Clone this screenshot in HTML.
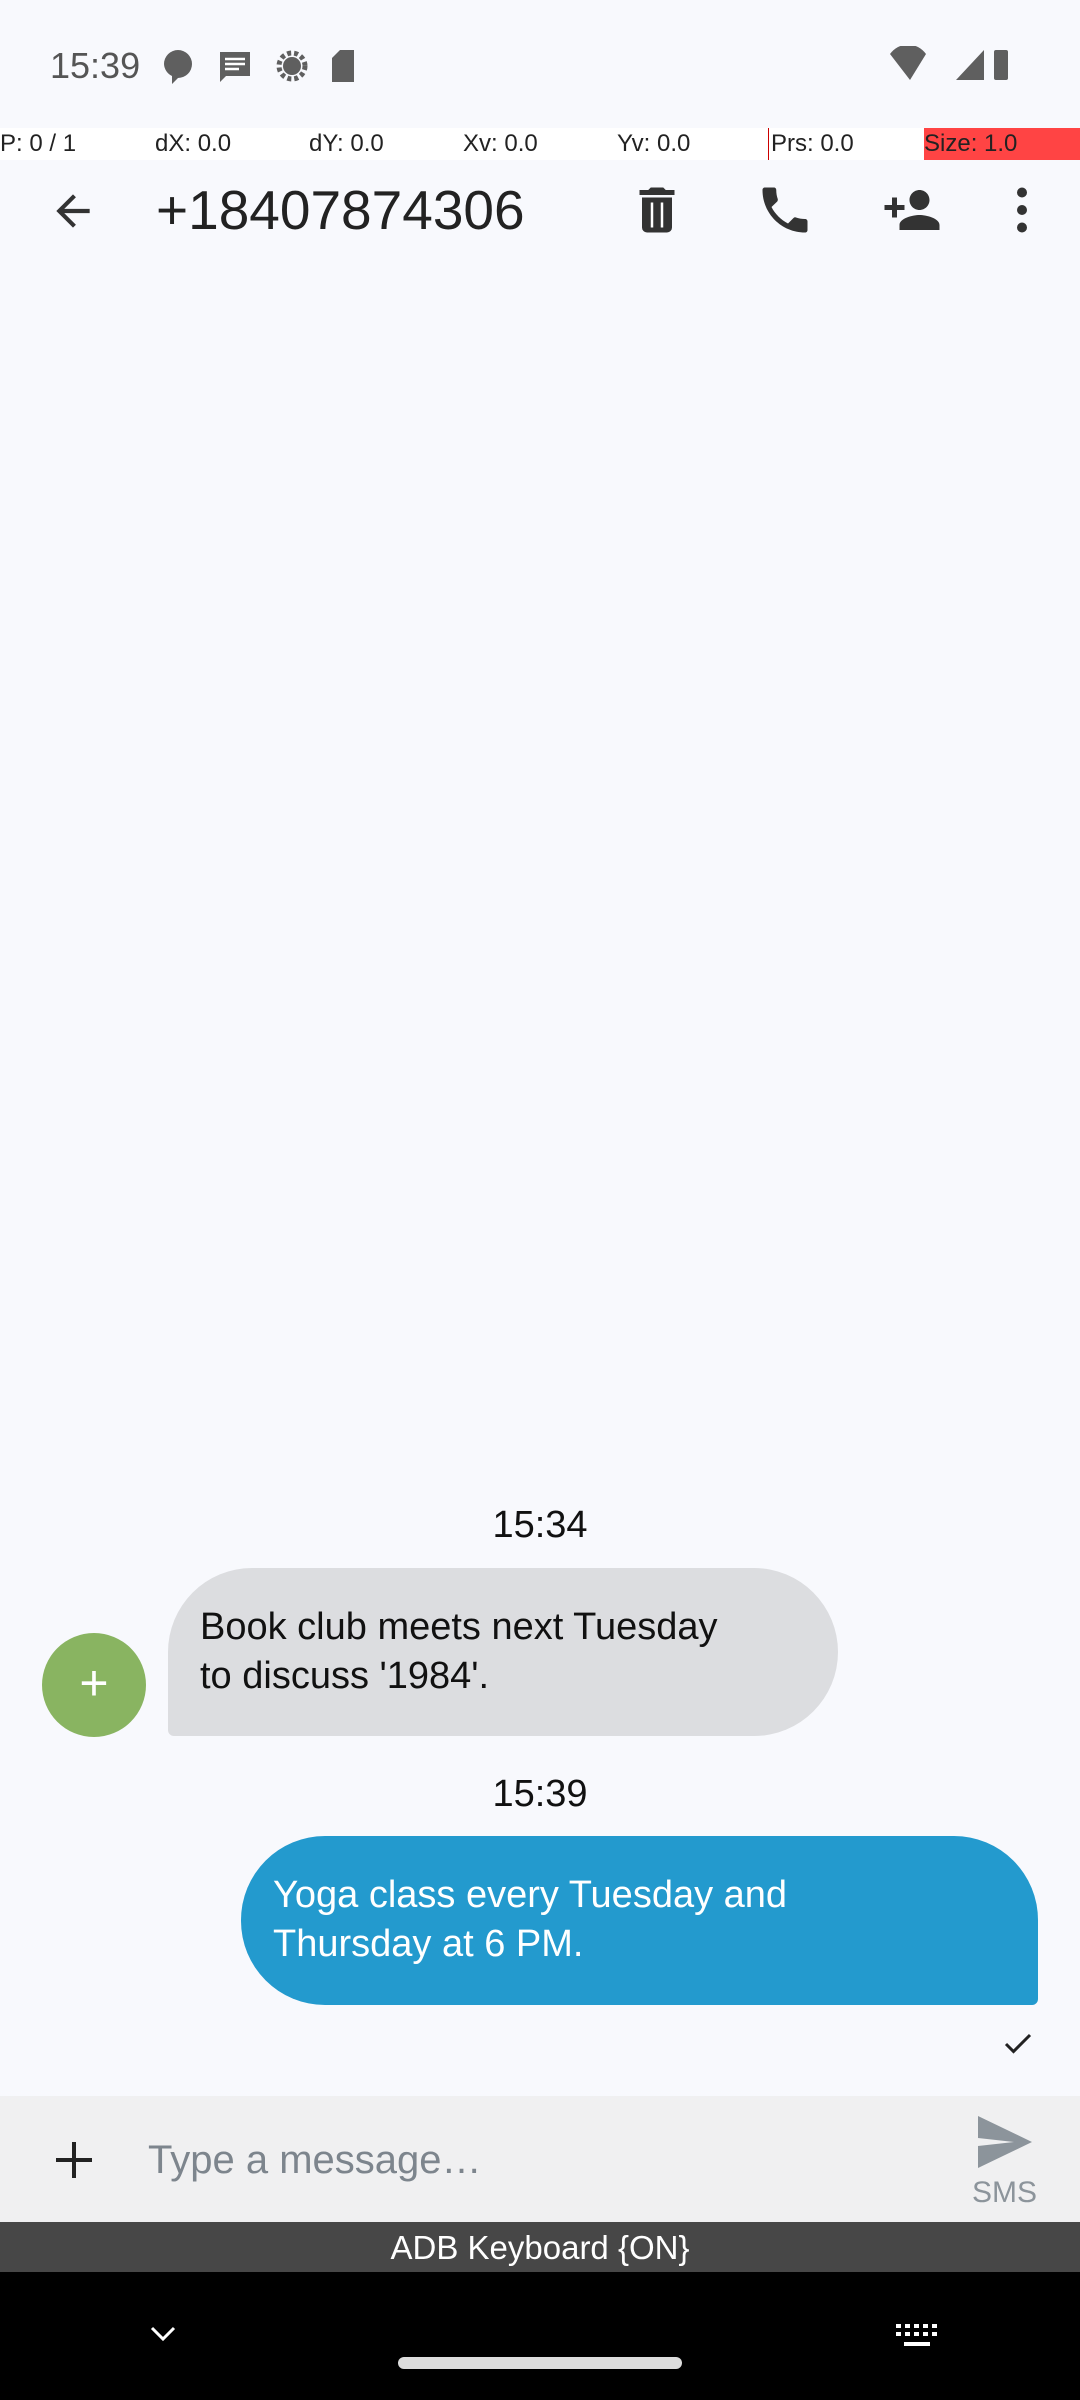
<!DOCTYPE html>
<html><head><meta charset="utf-8"><style>
*{margin:0;padding:0;box-sizing:border-box}
body{width:1080px;height:2400px;background:#f8f9fd;position:relative;overflow:hidden;font-family:"Liberation Sans",sans-serif}
.a{position:absolute}
</style></head><body>
<div class="a" style="left:50px;top:45px;font-size:36px;color:#555">15:39</div>
<svg class="a" style="left:160px;top:46px" width="220" height="40" viewBox="0 0 220 40">
<path d="M4 18a14 14 0 1 1 14 14l-6 6v-8a14 14 0 0 1-8-12z" fill="#5f5f5f"/>
<path d="M60 6h30v24H66l-6 6z" fill="#5f5f5f"/><path d="M65 13h20M65 18h20M65 23h14" stroke="#fff" stroke-width="2.5"/>
<circle cx="132" cy="20" r="13" fill="none" stroke="#5f5f5f" stroke-width="5" stroke-dasharray="4 3"/><circle cx="132" cy="20" r="9" fill="#5f5f5f"/>
<path d="M180 4h14v32h-22V12z" fill="#5f5f5f"/>
</svg>
<svg class="a" style="left:888px;top:46px" width="130" height="40" viewBox="0 0 130 40">
<path d="M2 8a22 22 0 0 1 36 0L22 34z" fill="#5f5f5f"/>
<path d="M68 34L96 4v30z" fill="#5f5f5f"/>
<rect x="106" y="4" width="14" height="30" rx="2" fill="#5f5f5f"/>
</svg>
<div class="a" style="left:0;top:128px;width:1080px;height:32px;background:#fff;font-size:24px;color:#222;line-height:32px">
<span class="a" style="left:0">P: 0 / 1</span><span class="a" style="left:155px">dX: 0.0</span><span class="a" style="left:309px">dY: 0.0</span><span class="a" style="left:463px">Xv: 0.0</span><span class="a" style="left:617px">Yv: 0.0</span><span class="a" style="left:768px;border-left:1px solid #c00;padding-left:2px">Prs: 0.0</span><span class="a" style="left:924px;width:156px;background:#f44;height:32px">Size: 1.0</span></div>
<svg class="a" style="left:48px;top:186px" width="50" height="50" viewBox="0 0 24 24"><path d="M20 11H7.8l5.6-5.6L12 4l-8 8 8 8 1.4-1.4L7.8 13H20z" fill="#333"/></svg>
<div class="a" style="left:156px;top:178px;font-size:55px;color:#222">+18407874306</div>
<svg class="a" style="left:627px;top:180px" width="60" height="60" viewBox="0 0 24 24"><path d="M6 19a2 2 0 0 0 2 2h8a2 2 0 0 0 2-2V7H6zM19 4h-3.5l-1-1h-5l-1 1H5v2h14z" fill="#333"/><path d="M10 9v10M14 9v10" stroke="#fff" stroke-width="1"/></svg>
<svg class="a" style="left:755px;top:180px" width="60" height="60" viewBox="0 0 24 24"><path d="M6.6 10.8c1.4 2.8 3.8 5.1 6.6 6.6l2.2-2.2c.3-.3.7-.4 1-.2 1.1.4 2.3.6 3.6.6.6 0 1 .4 1 1V20c0 .6-.4 1-1 1C10.6 21 3 13.4 3 4c0-.6.4-1 1-1h3.5c.6 0 1 .4 1 1 0 1.3.2 2.5.6 3.6.1.3 0 .7-.2 1z" fill="#333"/></svg>
<svg class="a" style="left:880px;top:180px" width="64" height="60" viewBox="0 0 24 24"><path d="M15 12c2.2 0 4-1.8 4-4s-1.8-4-4-4-4 1.8-4 4 1.8 4 4 4zm-9-2V7H4v3H1v2h3v3h2v-3h3v-2zm9 4c-2.7 0-8 1.3-8 4v2h16v-2c0-2.7-5.3-4-8-4z" fill="#333"/></svg>
<svg class="a" style="left:992px;top:180px" width="60" height="60" viewBox="0 0 24 24"><circle cx="12" cy="5" r="2" fill="#333"/><circle cx="12" cy="12" r="2" fill="#333"/><circle cx="12" cy="19" r="2" fill="#333"/></svg>
<div class="a" style="left:0;width:1080px;top:1504px;text-align:center;font-size:38px;color:#111">15:34</div>
<div class="a" style="left:42px;top:1633px;width:104px;height:104px;border-radius:50%;background:#89b461;color:#fff;font-size:50px;text-align:center;line-height:100px">+</div>
<div class="a" style="left:168px;top:1568px;width:670px;height:168px;background:#dcdde0;border-radius:84px 84px 84px 6px;padding:35px 32px;font-size:38px;line-height:49px;color:#111;white-space:nowrap">Book club meets next Tuesday<br>to discuss '1984'.</div>
<div class="a" style="left:0;width:1080px;top:1773px;text-align:center;font-size:38px;color:#111">15:39</div>
<div class="a" style="left:241px;top:1836px;width:797px;height:169px;background:#239ace;border-radius:84px 84px 6px 84px;padding:35px 32px;font-size:38px;line-height:49px;color:#fff;white-space:nowrap">Yoga class every Tuesday and<br>Thursday at 6 PM.</div>
<svg class="a" style="left:1000px;top:2026px" width="36" height="36" viewBox="0 0 24 24"><path d="M4 12l5 5L20 6" stroke="#222" stroke-width="2" fill="none"/></svg>
<div class="a" style="left:0;top:2096px;width:1080px;height:126px;background:#f0f0f1"></div>
<svg class="a" style="left:50px;top:2136px" width="48" height="48" viewBox="0 0 24 24"><path d="M12 3v18M3 12h18" stroke="#222" stroke-width="2"/></svg>
<div class="a" style="left:148px;top:2138px;font-size:40px;color:#7d858d">Type a message…</div>
<svg class="a" style="left:976px;top:2114px" width="58" height="56" viewBox="0 0 58 56"><path d="M2 2l54 26L2 54V32l36-4-36-4z" fill="#8c949b"/></svg>
<div class="a" style="left:972px;top:2176px;font-size:30px;color:#8c949b">SMS</div>
<div class="a" style="left:0;top:2222px;width:1080px;height:50px;background:#474747;color:#fff;font-size:33px;text-align:center;line-height:52px">ADB Keyboard {ON}</div>
<div class="a" style="left:0;top:2272px;width:1080px;height:128px;background:#000"></div>
<svg class="a" style="left:148px;top:2322px" width="30" height="24" viewBox="0 0 30 24"><path d="M4 6l11 11L26 6" stroke="#fff" stroke-width="3" fill="none"/></svg>
<svg class="a" style="left:896px;top:2324px" width="42" height="26" viewBox="0 0 42 26"><g fill="#fff"><rect x="0" y="0" width="5" height="4"/><rect x="9" y="0" width="5" height="4"/><rect x="18" y="0" width="5" height="4"/><rect x="27" y="0" width="5" height="4"/><rect x="36" y="0" width="5" height="4"/><rect x="0" y="8" width="5" height="4"/><rect x="9" y="8" width="5" height="4"/><rect x="18" y="8" width="5" height="4"/><rect x="27" y="8" width="5" height="4"/><rect x="36" y="8" width="5" height="4"/><rect x="8" y="18" width="26" height="4"/></g></svg>
<div class="a" style="left:398px;top:2357px;width:284px;height:12px;border-radius:6px;background:#ddd"></div>
</body></html>
